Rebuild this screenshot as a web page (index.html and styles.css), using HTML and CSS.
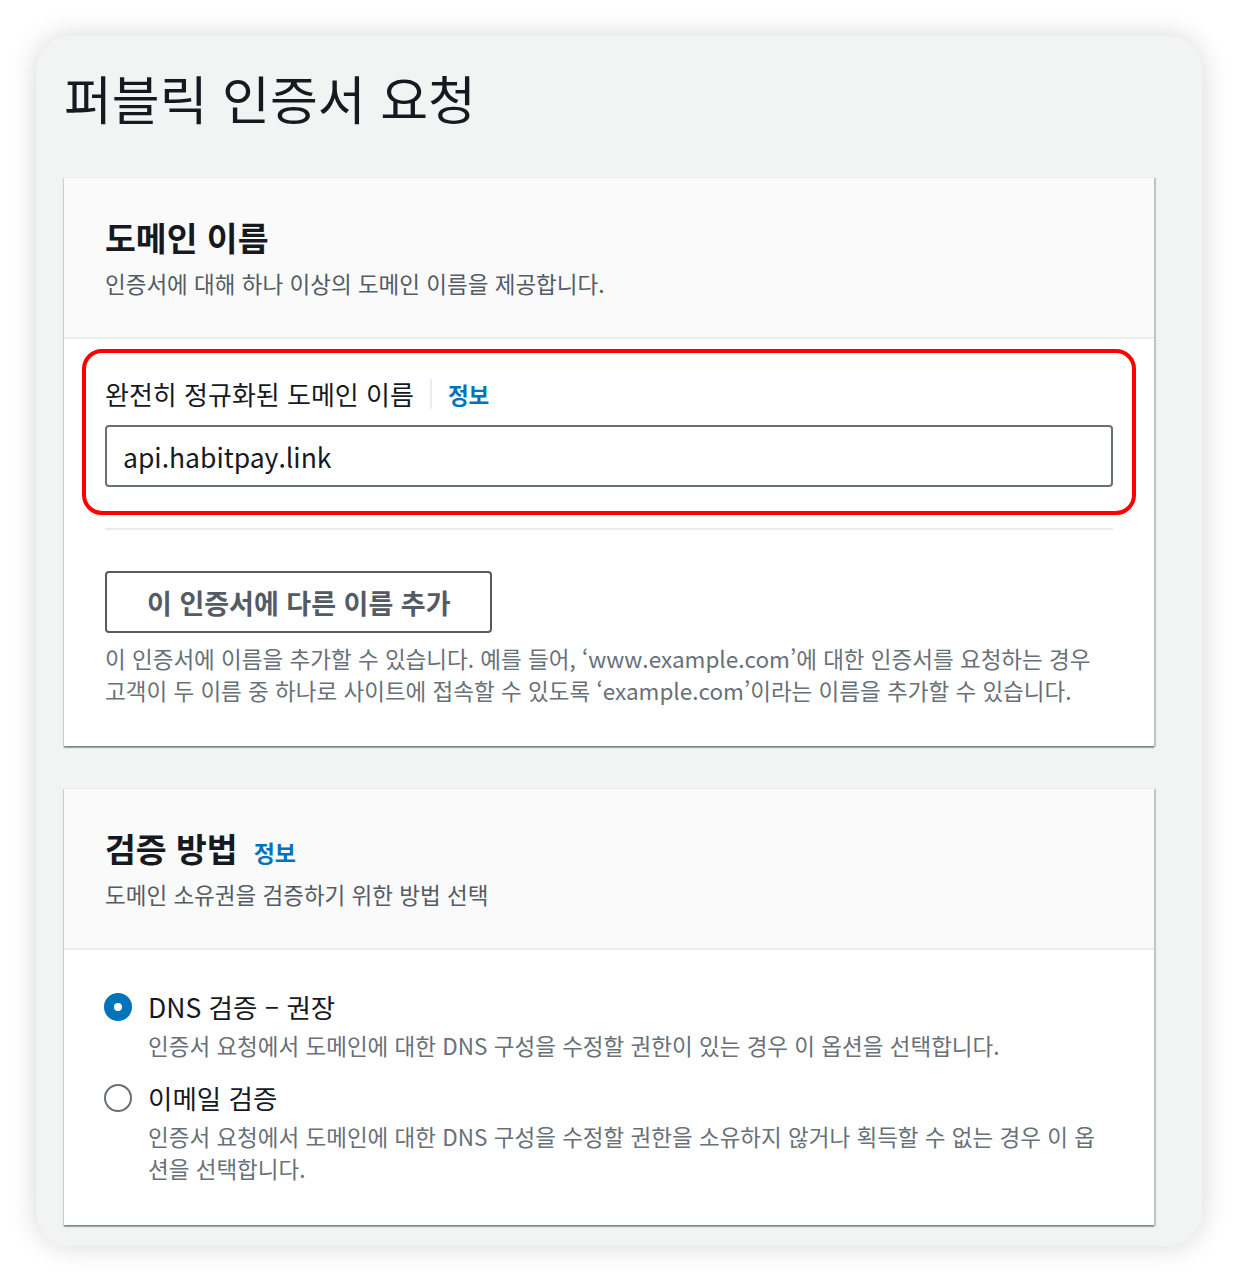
FILE: index.html
```html
<!DOCTYPE html>
<html lang="ko">
<head>
    <meta charset="UTF-8">
    <meta name="viewport" content="width=device-width, initial-scale=1.0">
    <title>퍼블릭 인증서 요청</title>
    <link rel="stylesheet" href="styles.css">
</head>
<body>
    <div class="frame">
        <h1>퍼블릭 인증서 요청</h1>

        <div class="card">
            <div class="card-header">
                <h2>도메인 이름</h2>
                <p class="desc">인증서에 대해 하나 이상의 도메인 이름을 제공합니다.</p>
            </div>
            <div class="card-body">
                <div class="highlight">
                    <div class="field-label">
                        <label for="domain">완전히 정규화된 도메인 이름</label>
                        <span class="sep"></span>
                        <a class="info" href="#">정보</a>
                    </div>
                    <input type="text" id="domain" value="api.habitpay.link">
                </div>
                <div class="divider"></div>
                <button class="secondary">이 인증서에 다른 이름 추가</button>
                <p class="help">이 인증서에 이름을 추가할 수 있습니다. 예를 들어, ‘www.example.com’에 대한 인증서를 요청하는 경우 고객이 두 이름 중 하나로 사이트에 접속할 수 있도록 ‘example.com’이라는 이름을 추가할 수 있습니다.</p>
            </div>
        </div>

        <div class="card">
            <div class="card-header">
                <h2>검증 방법 <a class="info" href="#">정보</a></h2>
                <p class="desc">도메인 소유권을 검증하기 위한 방법 선택</p>
            </div>
            <div class="card-body radios">
                <label class="radio">
                    <input type="radio" name="method" checked>
                    <span class="dot"></span>
                    <span class="radio-text">
                        <span class="radio-title">DNS 검증 – 권장</span>
                        <span class="help">인증서 요청에서 도메인에 대한 DNS 구성을 수정할 권한이 있는 경우 이 옵션을 선택합니다.</span>
                    </span>
                </label>
                <label class="radio">
                    <input type="radio" name="method">
                    <span class="dot"></span>
                    <span class="radio-text">
                        <span class="radio-title">이메일 검증</span>
                        <span class="help">인증서 요청에서 도메인에 대한 DNS 구성을 수정할 권한을 소유하지 않거나 획득할 수 없는 경우 이 옵션을 선택합니다.</span>
                    </span>
                </label>
            </div>
        </div>
    </div>
</body>
</html>
```

FILE: styles.css
```css
body {
    font-family: 'Noto Sans CJK KR', 'Noto Sans', sans-serif;
    background-color: #fff;
    margin: 0;
    padding: 36px;
    color: #16191f;
}
.frame {
    background-color: #f2f3f3;
    border-radius: 34px;
    box-shadow: 0 0 28px rgba(0, 0, 0, 0.16);
    padding: 32px 48px 21px 28px;
}
h1 {
    margin: 0 0 49px;
    font-size: 52px;
    line-height: 60px;
    font-weight: 400;
}
.card {
    background-color: #fff;
    border-top: 1px solid #eaeded;
    box-shadow: 0 2px 1px 0 rgba(0, 28, 36, 0.3), 2px 1px 1px 0 rgba(0, 28, 36, 0.18), -1px 1px 1px 0 rgba(0, 28, 36, 0.12);
    margin-bottom: 42px;
}
.card:last-child {
    margin-bottom: 0;
}
.card-header {
    background-color: #fafafa;
    border-bottom: 2px solid #eaeded;
    padding: 39px 41px 38px;
}
h2 {
    display: flex;
    align-items: baseline;
    gap: 16px;
    height: 40px;
    margin: 0 0 10px;
    font-size: 33.5px;
    line-height: 40px;
    font-weight: 700;
}
h2 .info {
    font-size: 23px;
    line-height: 24px;
}
.desc {
    margin: 0;
    font-size: 22.5px;
    line-height: 32px;
    color: #545b64;
}
.card-body {
    padding: 10px 41px 40px;
}
.highlight {
    border: 4px solid #ff0000;
    border-radius: 20px;
    margin: 0 -23px;
    padding: 25px 19px 24px;
}
.field-label {
    display: flex;
    align-items: center;
    font-size: 26px;
    line-height: 32px;
    margin-bottom: 15px;
}
.sep {
    width: 2px;
    height: 30px;
    background-color: #eaeded;
    margin: 0 16px;
}
.info {
    color: #0073bb;
    font-weight: 700;
    text-decoration: none;
    font-size: 22.5px;
}
.highlight input {
    display: block;
    width: 100%;
    height: 62px;
    box-sizing: border-box;
    border: 2px solid #687078;
    border-radius: 4px;
    padding: 0 16px;
    font-family: inherit;
    font-size: 26.5px;
    color: #16191f;
}
.divider {
    height: 2px;
    background-color: #eaeded;
    margin: 13px 0 41px;
}
button.secondary {
    height: 62px;
    padding: 0 40px;
    border: 2px solid #545b64;
    border-radius: 4px;
    background-color: #fff;
    color: #545b64;
    font-family: inherit;
    font-size: 27px;
    font-weight: 700;
}
.help {
    margin: 9px 0 0;
    font-size: 22.5px;
    line-height: 32px;
    color: #687078;
}
.radios {
    padding-top: 39px;
    padding-bottom: 41px;
}
.radio {
    display: flex;
    align-items: flex-start;
    margin-bottom: 19px;
}
.radio:last-child {
    margin-bottom: 0;
}
.radio input {
    display: none;
}
.dot {
    flex: none;
    width: 28px;
    height: 28px;
    box-sizing: border-box;
    border-radius: 50%;
    border: 2px solid #687078;
    margin: 4px 16px 0 -1px;
    background-color: #fff;
}
.radio input:checked + .dot {
    border: 10px solid #0073bb;
}
.radio-text {
    display: flex;
    flex-direction: column;
}
.radio-title {
    font-size: 26.5px;
    line-height: 36px;
}
.radio .help {
    margin-top: 4px;
}
```
